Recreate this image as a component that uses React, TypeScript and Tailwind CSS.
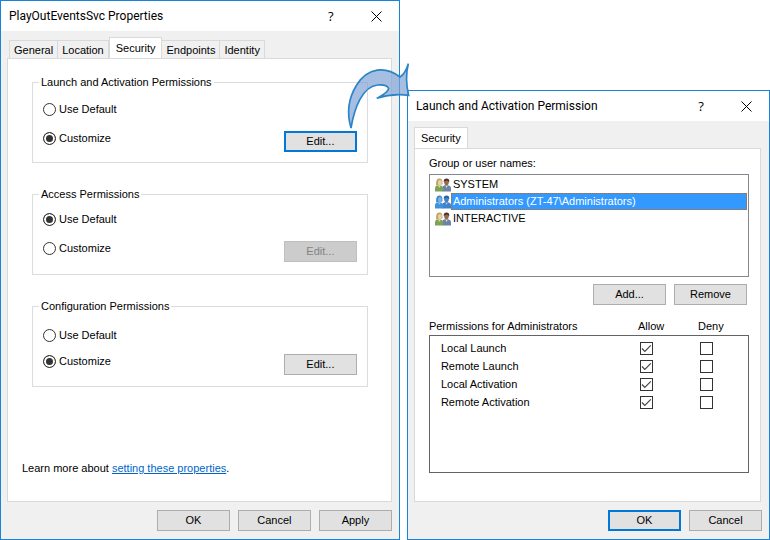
import React from 'react';

const BUTTON_BASE = 'w-[73px] h-[21px] text-center text-black bg-[#e1e1e1]';

type WinButtonProps = {
  children: React.ReactNode;
  primary?: boolean;
  disabled?: boolean;
};

const WinButton = ({ children, primary, disabled }: WinButtonProps) => (
  <button
    type="button"
    disabled={disabled}
    className={`${BUTTON_BASE} ${
      primary ? 'border-2 border-[#0078d7] leading-[17px]' : 'border border-[#adadad] leading-[19px]'
    } disabled:bg-[#cccccc] disabled:border-[#bfbfbf] disabled:text-[#838383]`}
  >
    {children}
  </button>
);

const TitleBar = ({ title }: { title: string }) => (
  <header className="flex items-center justify-between h-[30px] bg-white pl-2 pr-[17px]">
    <h1 className="font-[Roboto,'Open_Sans',sans-serif] text-[12px] leading-4">{title}</h1>
    <div className="flex items-center gap-9">
      <button type="button" aria-label="Help" className="w-2 font-['Open_Sans',sans-serif] text-[13px] leading-4 font-medium">
        ?
      </button>
      <button type="button" aria-label="Close">
        <svg width="11" height="11" viewBox="0 0 11 11" fill="none" stroke="#000" strokeWidth="1">
          <path d="M.5 .5l10 10M10.5 .5l-10 10" />
        </svg>
      </button>
    </div>
  </header>
);

type TabProps = {
  label: string;
  active?: boolean;
};

const Tab = ({ label, active }: TabProps) => (
  <button
    type="button"
    role="tab"
    aria-selected={!!active}
    className={
      active
        ? 'h-[22px] -mb-px px-[6px] pb-0.5 border border-b-0 border-[#d9d9d9] bg-white leading-4'
        : 'h-[18px] px-1 border border-b-0 border-[#d9d9d9] -ml-px first:ml-0 leading-4'
    }
  >
    {label}
  </button>
);

type GroupProps = {
  name: string;
  title: string;
  value: 'default' | 'custom';
  spacing: string;
  primary?: boolean;
};

const RADIO =
  'appearance-none size-[13px] rounded-full border border-[#333] bg-white checked:bg-[#333] checked:shadow-[inset_0_0_0_2px_white]';

const PermissionGroup = ({ name, title, value, spacing, primary }: GroupProps) => (
  <fieldset className="min-h-[89px] border border-[#dcdcdc] px-1.5">
    <legend className="px-0.5 leading-4">{title}</legend>
    <div className={`flex flex-col pl-1 pr-1 ${spacing}`}>
      <label className="flex items-center gap-[3px] leading-4">
        <input type="radio" name={name} defaultChecked={value === 'default'} className={RADIO} />
        Use Default
      </label>
      <div className="flex items-start justify-between">
        <label className="flex items-center gap-[3px] leading-4">
          <input type="radio" name={name} defaultChecked={value === 'custom'} className={RADIO} />
          Customize
        </label>
        <div className="pt-px">
          <WinButton primary={primary} disabled={value === 'default'}>
            Edit...
          </WinButton>
        </div>
      </div>
    </div>
  </fieldset>
);

const ArrowCallout = () => (
  <svg
    aria-hidden="true"
    className="absolute z-10 top-[54px] -right-[21px] size-20 pointer-events-none"
    viewBox="0 0 240 240"
  >
    <path
      d="M33 219C20 175 25 130 50 90C84 36 137 33 180 66C194 57 200 42 205 26C197 58 199 92 206 121C172 116 140 120 110 130C128 120 142 114 146 101C143 92 128 89 113 90C68 94 43 158 33 219Z"
      fill="#7d9fd6"
      fillOpacity=".68"
      stroke="#2a84c6"
      strokeWidth="5"
      strokeLinejoin="miter"
    />
  </svg>
);

const UsersIcon = ({ selected }: { selected?: boolean }) => (
  <svg width="16" height="14" viewBox="0 0 16 14" className="shrink-0">
    <path d="M7.5 13.5V9.5c0-1.8 1.5-2.6 3.7-2.6S16 8 16 10.200v3.300z" fill={selected ? '#3f83cf' : '#6b83a8'} />
    <path d="M10.500 7.500l1 2.500 1.300-2.500z" fill={selected ? '#a9cdf5' : '#dfe6ee'} />
    <ellipse cx="11.500" cy="4.300" rx="2.300" ry="3.100" fill={selected ? '#4a80bd' : '#9a6b4b'} />
    <path d="M8.700 3.800C8.500 1.500 9.900.5 11.600.5s3 1.200 2.700 3.400c-1.200-.1-1.700-.9-2.400-1.600-.7.900-1.800 1.300-3.200 1.500z" fill={selected ? '#2361a5' : '#44362e'} />
    <path d="M0 13.500v-3c0-2 1.500-3.200 4-3.200s4.200 1.200 4.200 3.200v3z" fill={selected ? '#3f93d6' : '#7ba455'} />
    <path d="M2.800 7.500l1.500 2.600 1.600-2.600z" fill={selected ? '#85b9ee' : '#e6c7a2'} />
    <path d="M1.200 7.500C.8 3.200 1.600.4 4.300.4c2.600 0 3.500 2 3.100 6.200z" fill={selected ? '#4189ca' : '#b9a45f'} />
    <ellipse cx="4.900" cy="4.700" rx="1.900" ry="2.800" fill={selected ? '#75b1ec' : '#ecd0a8'} />
  </svg>
);

const PERMISSIONS = ['Local Launch', 'Remote Launch', 'Local Activation', 'Remote Activation'];

const CheckBox = ({ label, checked }: { label: string; checked?: boolean }) => (
  <span className="grid size-[13px]">
    <input
      type="checkbox"
      aria-label={label}
      defaultChecked={checked}
      className="peer col-start-1 row-start-1 appearance-none size-[13px] border border-[#333] bg-white"
    />
    <svg
      viewBox="0 0 13 13"
      fill="none"
      stroke="#444"
      strokeWidth="1.2"
      className="col-start-1 row-start-1 size-[13px] invisible peer-checked:visible pointer-events-none"
    >
      <path d="M2 6.500L4.800 9.300l6-6" />
    </svg>
  </span>
);

const PropertiesWindow = () => (
  <section className="relative flex flex-col flex-[400_1_0%] border border-[#1883d7] bg-[#f0f0f0]">
    <TitleBar title="PlayOutEventsSvc Properties" />
    <div className="flex flex-col flex-1 pt-[6px] px-[7px] pb-2">
      <div role="tablist" className="flex items-end pl-px">
        <Tab label="General" />
        <Tab label="Location" />
        <Tab label="Security" active />
        <Tab label="Endpoints" />
        <Tab label="Identity" />
      </div>
      <div className="flex flex-col flex-1 -ml-px border border-[#d9d9d9] bg-white pt-[15px] pl-6 pr-[23px]">
        <div className="flex flex-col gap-[23px]">
          <PermissionGroup
            name="launch"
            title="Launch and Activation Permissions"
            value="custom"
            spacing="pt-[11px] gap-[13px]"
            primary
          />
          <PermissionGroup name="access" title="Access Permissions" value="default" spacing="pt-[9px] gap-[13px]" />
          <PermissionGroup
            name="config"
            title="Configuration Permissions"
            value="custom"
            spacing="pt-[13px] gap-[10px]"
          />
        </div>
        <p className="mt-auto mb-[25px] -ml-[10px] leading-4">
          Learn more about{' '}
          <a href="#" className="text-[#0066cc] underline">
            setting these properties
          </a>
          .
        </p>
      </div>
      <div className="flex justify-end gap-2 pt-2">
        <WinButton>OK</WinButton>
        <WinButton>Cancel</WinButton>
        <WinButton>Apply</WinButton>
      </div>
    </div>
    <ArrowCallout />
  </section>
);

const PermissionWindow = () => (
  <section className="flex flex-col flex-[363_1_0%] mt-[90px] border border-[#1883d7] bg-[#f0f0f0]">
    <TitleBar title="Launch and Activation Permission" />
    <div className="flex flex-col flex-1 pt-[6px] pl-1.5 pr-2 pb-2">
      <div role="tablist" className="flex items-end">
        <Tab label="Security" active />
      </div>
      <div className="flex-1 border border-[#d9d9d9] bg-white pt-[6px] pl-[14px] pr-[11px]">
        <h2 id="group-label" className="leading-4">Group or user names:</h2>
        <ul role="listbox" aria-labelledby="group-label" className="h-[103px] mt-[3px] border border-[#828790] pt-px pl-[5px] pr-px">
          <li role="option" aria-selected="false" className="flex items-center h-[17px]">
            <UsersIcon />
            <span className="pl-0.5">SYSTEM</span>
          </li>
          <li role="option" aria-selected="true" className="flex items-center h-[17px]">
            <UsersIcon selected />
            <span className="flex-1 h-[17px] pl-px leading-[15px] text-white bg-[#3399ff] border border-dotted border-[#cc6600]">
              Administrators (ZT-47\Administrators)
            </span>
          </li>
          <li role="option" aria-selected="false" className="flex items-center h-[17px]">
            <UsersIcon />
            <span className="pl-0.5">INTERACTIVE</span>
          </li>
        </ul>
        <div className="flex justify-end gap-2 pt-[7px] pr-0.5">
          <WinButton>Add...</WinButton>
          <WinButton>Remove</WinButton>
        </div>
        <table className="w-full mt-[13px] border-separate border-spacing-0 text-left">
          <thead>
            <tr className="h-[18px] leading-4">
              <th className="font-normal align-top border-b border-[#646464]">Permissions for Administrators</th>
              <th className="w-[60px] font-normal align-top border-b border-[#646464]">Allow</th>
              <th className="w-[51px] font-normal align-top border-b border-[#646464]">Deny</th>
            </tr>
          </thead>
          <tbody>
            <tr>
              <td colSpan={3} className="h-[3px] border-x border-[#646464]"></td>
            </tr>
            {PERMISSIONS.map((name) => (
              <tr key={name} className="h-[18px]">
                <td className="pl-[11px] border-l border-[#646464]">{name}</td>
                <td className="pl-0.5">
                  <CheckBox label={`Allow ${name}`} checked />
                </td>
                <td className="pl-0.5 border-r border-[#646464]">
                  <CheckBox label={`Deny ${name}`} />
                </td>
              </tr>
            ))}
            <tr>
              <td colSpan={3} className="h-[62px] border-x border-b border-[#646464]"></td>
            </tr>
          </tbody>
        </table>
      </div>
      <div className="flex justify-end gap-2 pt-2 -mr-px">
        <WinButton primary>OK</WinButton>
        <WinButton>Cancel</WinButton>
      </div>
    </div>
  </section>
);

const App = () => (
  <main className="flex gap-[7px] min-h-screen bg-white text-black font-['Liberation_Sans',Arial,sans-serif] text-[11px]">
    <PropertiesWindow />
    <PermissionWindow />
  </main>
);

export default App;
